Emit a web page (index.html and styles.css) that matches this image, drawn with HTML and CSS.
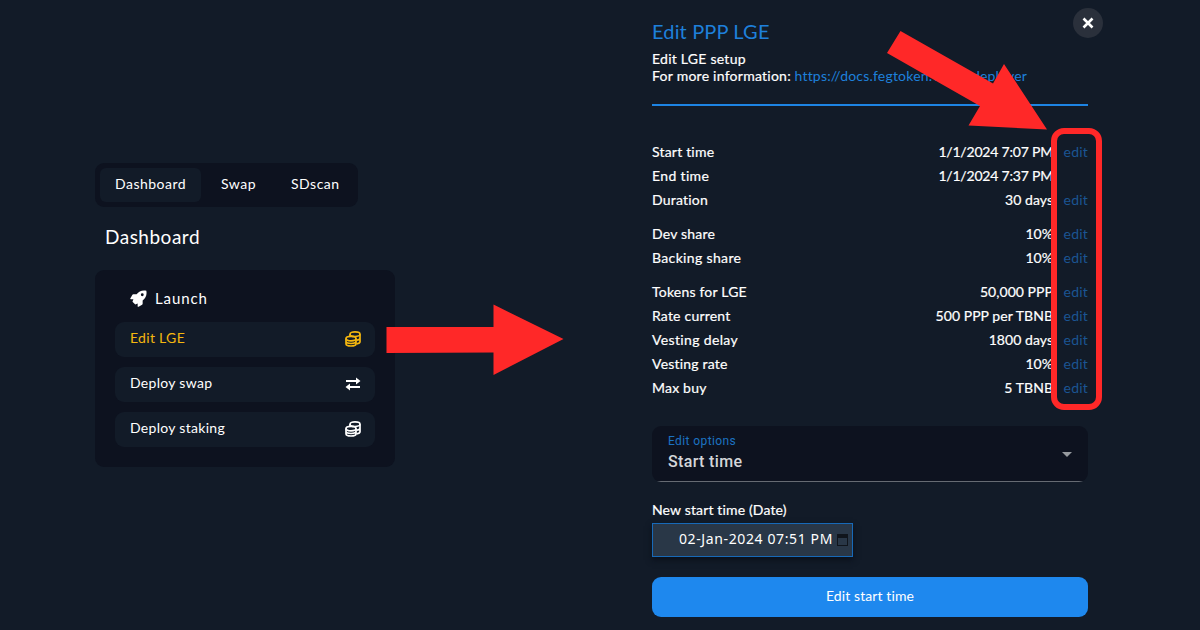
FILE: index.html
```html
<!DOCTYPE html>
<html lang="en">
<head>
<meta charset="utf-8">
<title>Edit PPP LGE</title>
<link rel="stylesheet" href="styles.css">
</head>
<body>
<svg class="defs" aria-hidden="true">
  <symbol id="coins" viewBox="0 0 16 16">
    <g fill="none" stroke="currentColor" stroke-width="1.7">
      <ellipse cx="10" cy="3.2" rx="5" ry="2.3"/>
      <path d="M5 3.2v2.600M15 3.200v7.600c0 1-1.500 1.800-3.500 2.100M15 7c0 1.200-1.600 2-3.700 2.200"/>
      <ellipse cx="6" cy="7.600" rx="5" ry="2.300"/>
      <path d="M1 7.600v5.100c0 1.200 2.200 2.300 5 2.300s5-1.100 5-2.300V7.600M1 10.300c0 1.200 2.200 2.200 5 2.200s5-1 5-2.200"/>
    </g>
  </symbol>
</svg>
<main class="page">
  <section class="dashboard">
    <nav class="tabs">
      <a class="tab tab-active">Dashboard</a>
      <a class="tab">Swap</a>
      <a class="tab">SDscan</a>
    </nav>
    <h1 class="heading">Dashboard</h1>
    <div class="card">
      <div class="card-title">
        <svg class="rocket" viewBox="0 0 18 18"><path fill="currentColor" fill-rule="evenodd" d="M17.3.7C12.500-.2 9.400 1.600 7 4.500H3.500Q2.800 4.500 2.400 5.200L.3 9.100Q.1 9.900.9 9.900H3.600L2.600 12.400 5.600 15.400 8.100 14.400v3.100q.2.500 1 .2l3.700-2q.6-.4.6-1.100V11C16.400 8.600 18.200 5.500 17.300.7ZM13 3.500a1.500 1.500 0 1 1 0 3 1.500 1.500 0 0 1 0-3Z"/></svg>
        <span>Launch</span>
      </div>
      <a class="item item-active"><span>Edit LGE</span><svg class="icon"><use href="#coins"/></svg></a>
      <a class="item"><span>Deploy swap</span><svg class="icon" viewBox="0 0 16 16"><path d="M1 5h11M15 11H4" fill="none" stroke="currentColor" stroke-width="1.800"/><path d="M11 1.600 15.500 5 11 8.400ZM5 7.600.5 11 5 14.400Z" fill="currentColor"/></svg></a>
      <a class="item"><span>Deploy staking</span><svg class="icon"><use href="#coins"/></svg></a>
    </div>
  </section>

  <section class="dialog">
    <button class="close" aria-label="Close"><svg viewBox="0 0 12 12"><path d="m1.500 1.500 9 9m0-9-9 9" fill="none" stroke="currentColor" stroke-width="2.600"/></svg></button>
    <header class="dialog-head">
      <h2 class="title">Edit PPP LGE</h2>
      <p class="intro"><span class="setup">Edit LGE setup</span><br><span class="more">For more information:</span> <a class="docs">https://docs.fegtoken<span class="domain">.com/</span>deployer</a></p>
    </header>
    <div class="groups">
      <div class="group">
        <div class="row"><span>Start time</span><span class="value tight">1/1/2024 7:07 PM</span><a class="edit">edit</a></div>
        <div class="row"><span class="wide">End time</span><span class="value tight">1/1/2024 7:37 PM</span><span class="edit"></span></div>
        <div class="row"><span>Duration</span><span class="value">30 days</span><a class="edit">edit</a></div>
      </div>
      <div class="group">
        <div class="row"><span>Dev share</span><span class="value">10%</span><a class="edit">edit</a></div>
        <div class="row"><span class="wide">Backing share</span><span class="value">10%</span><a class="edit">edit</a></div>
      </div>
      <div class="group">
        <div class="row"><span>Tokens for LGE</span><span class="value">50,000 PPP</span><a class="edit">edit</a></div>
        <div class="row"><span>Rate current</span><span class="value">500 PPP per TBNB</span><a class="edit">edit</a></div>
        <div class="row"><span class="wide">Vesting delay</span><span class="value">1800 days</span><a class="edit">edit</a></div>
        <div class="row"><span>Vesting rate</span><span class="value">10%</span><a class="edit">edit</a></div>
        <div class="row"><span>Max buy</span><span class="value">5 TBNB</span><a class="edit">edit</a></div>
      </div>
    </div>
    <div class="select">
      <div class="select-text"><span class="select-label">Edit options</span><span class="select-value">Start time</span></div>
      <span class="caret"></span>
    </div>
    <div class="field-label">New start time (Date)</div>
    <div class="date"><span>02-Jan-2024 07:51 PM</span><svg class="calendar" viewBox="0 0 11 12"><path d="M0 0h11v12H0ZM1 4v7h9V4Z" fill="#10151c" fill-rule="evenodd"/></svg></div>
    <button class="submit">Edit start time</button>
  </section>
  <svg class="annotations" viewBox="0 0 1200 630">
    <g fill="#ff2828">
      <path d="M386.500 327H493.500V304.500L563.500 339 493.500 375V352.500L386.500 353Z"/>
      <path d="M900.500 31 993 83.500 1004 64 1047 129.500 968.500 125.500 980 106 887 53Z"/>
    </g>
    <rect x="1054" y="131" width="45" height="276" rx="10" fill="none" stroke="#ff2828" stroke-width="6"/>
  </svg>
</main>
</body>
</html>
```
FILE: styles.css
```css
* { box-sizing: border-box; }
body {
  margin: 0;
  background: #121b28;
  color: #fff;
  font: 14px/24px Lato, "Liberation Sans", sans-serif;
}
h1, h2, p { margin: 0; font-weight: 400; }
button { border: 0; padding: 0; font: inherit; color: inherit; }
.defs { position: absolute; width: 0; height: 0; }
.page {
  position: relative;
  display: grid;
  grid-template-columns: 300px 436px;
  column-gap: 257px;
  align-items: start;
  width: 1200px;
  height: 630px;
  padding-left: 95px;
  overflow: hidden;
}
.dashboard { padding-top: 163px; letter-spacing: .3px; }
.tabs {
  display: flex;
  gap: 5px;
  width: 263px;
  height: 44px;
  padding: 5px;
  border-radius: 9px;
  background: #0d121f;
  letter-spacing: .48px;
}
.tab { display: flex; align-items: center; padding: 0 15px 2px; height: 34px; border-radius: 6px; white-space: nowrap; }
.tab-active { background: #121b28; }
.heading { padding: 15px 10px 1px; font-size: 19px; line-height: 30px; letter-spacing: .5px; }
.card {
  display: flex;
  flex-direction: column;
  gap: 10px;
  height: 197px;
  margin-top: 17px;
  padding: 16px 20px 20px;
  border-radius: 9px;
  background: #0d121f;
}
.card-title { display: flex; align-items: center; gap: 8px; height: 26px; padding: 0 0 2px 15px; font-size: 15px; letter-spacing: .9px; }
.rocket { width: 17px; height: 17px; }
.item {
  display: flex;
  flex: 0 0 35px;
  align-items: center;
  justify-content: space-between;
  padding: 0 14px 0 15px;
  border-radius: 9px;
  background: #121b28;
}
.item span { padding-bottom: 3px; }
.item-active { color: #f5b70f; }
.icon { width: 16px; height: 16px; margin-bottom: 2px; }
.dialog { position: relative; display: flex; flex-direction: column; padding-top: 18px; }
.close {
  position: absolute;
  top: 8px;
  right: -15px;
  display: grid;
  place-items: center;
  width: 30px;
  height: 30px;
  border-radius: 50%;
  background: #2a303b;
}
.close svg { width: 12px; height: 12px; }
.dialog-head { height: 88px; border-bottom: 2px solid #1d84e3; }
.title { color: #1e80db; font-size: 20px; line-height: 26px; letter-spacing: .15px; }
.intro { padding-top: 6px; line-height: 17px; white-space: nowrap; -webkit-text-stroke: .2px; }
.setup, .more { letter-spacing: .25px; }
.docs { color: #1e80db; letter-spacing: .2px; -webkit-text-stroke: 0; }
.domain { letter-spacing: 1.5px; }
.groups { display: flex; flex-direction: column; gap: 10px; padding-top: 34px; }
.row { display: grid; grid-template-columns: 1fr auto 25px; column-gap: 10px; height: 24px; letter-spacing: .2px; white-space: nowrap; -webkit-text-stroke: .2px; }
.row .wide { letter-spacing: .35px; }
.row .value { letter-spacing: .05px; }
.row .value.tight { letter-spacing: -.2px; }
.edit { color: #1b5593; text-align: right; -webkit-text-stroke: 0; }
.select {
  display: flex;
  align-items: center;
  justify-content: space-between;
  height: 56px;
  margin-top: 26px;
  padding: 1px 16px 0;
  border-radius: 9px;
  background: linear-gradient(#666b73, #666b73) 50% 100% / calc(100% - 10px) 1px no-repeat #0d121f;
}
.select-text { display: flex; flex-direction: column; padding-bottom: 2px; font-family: Roboto, sans-serif; }
.select-label { color: #1c72c2; font-size: 12px; line-height: 17px; letter-spacing: .4px; }
.select-value { color: #d4d6d9; font-size: 16px; font-weight: 500; line-height: 24px; letter-spacing: .35px; }
.caret { border: 5px solid transparent; border-top-color: #969a9f; border-bottom: 0; }
.field-label { padding-top: 16px; letter-spacing: .15px; -webkit-text-stroke: .2px; }
.date {
  display: flex;
  align-items: center;
  justify-content: flex-end;
  gap: 4px;
  width: 201px;
  height: 34px;
  margin-top: 1px;
  padding-right: 4px;
  border: 1px solid #1769b8;
  background: #293747;
  box-shadow: 0 3px 6px #0a101b;
  font-family: "Noto Sans", sans-serif;
  letter-spacing: .62px;
  white-space: nowrap;
}
.date span { padding-bottom: 2px; }
.calendar { width: 11px; height: 12px; }
.submit { height: 40px; margin-top: 20px; padding-bottom: 2px; border-radius: 9px; background: #1e88ee; letter-spacing: .1px; }
.annotations { position: absolute; inset: 0; width: 1200px; height: 630px; pointer-events: none; }
```
